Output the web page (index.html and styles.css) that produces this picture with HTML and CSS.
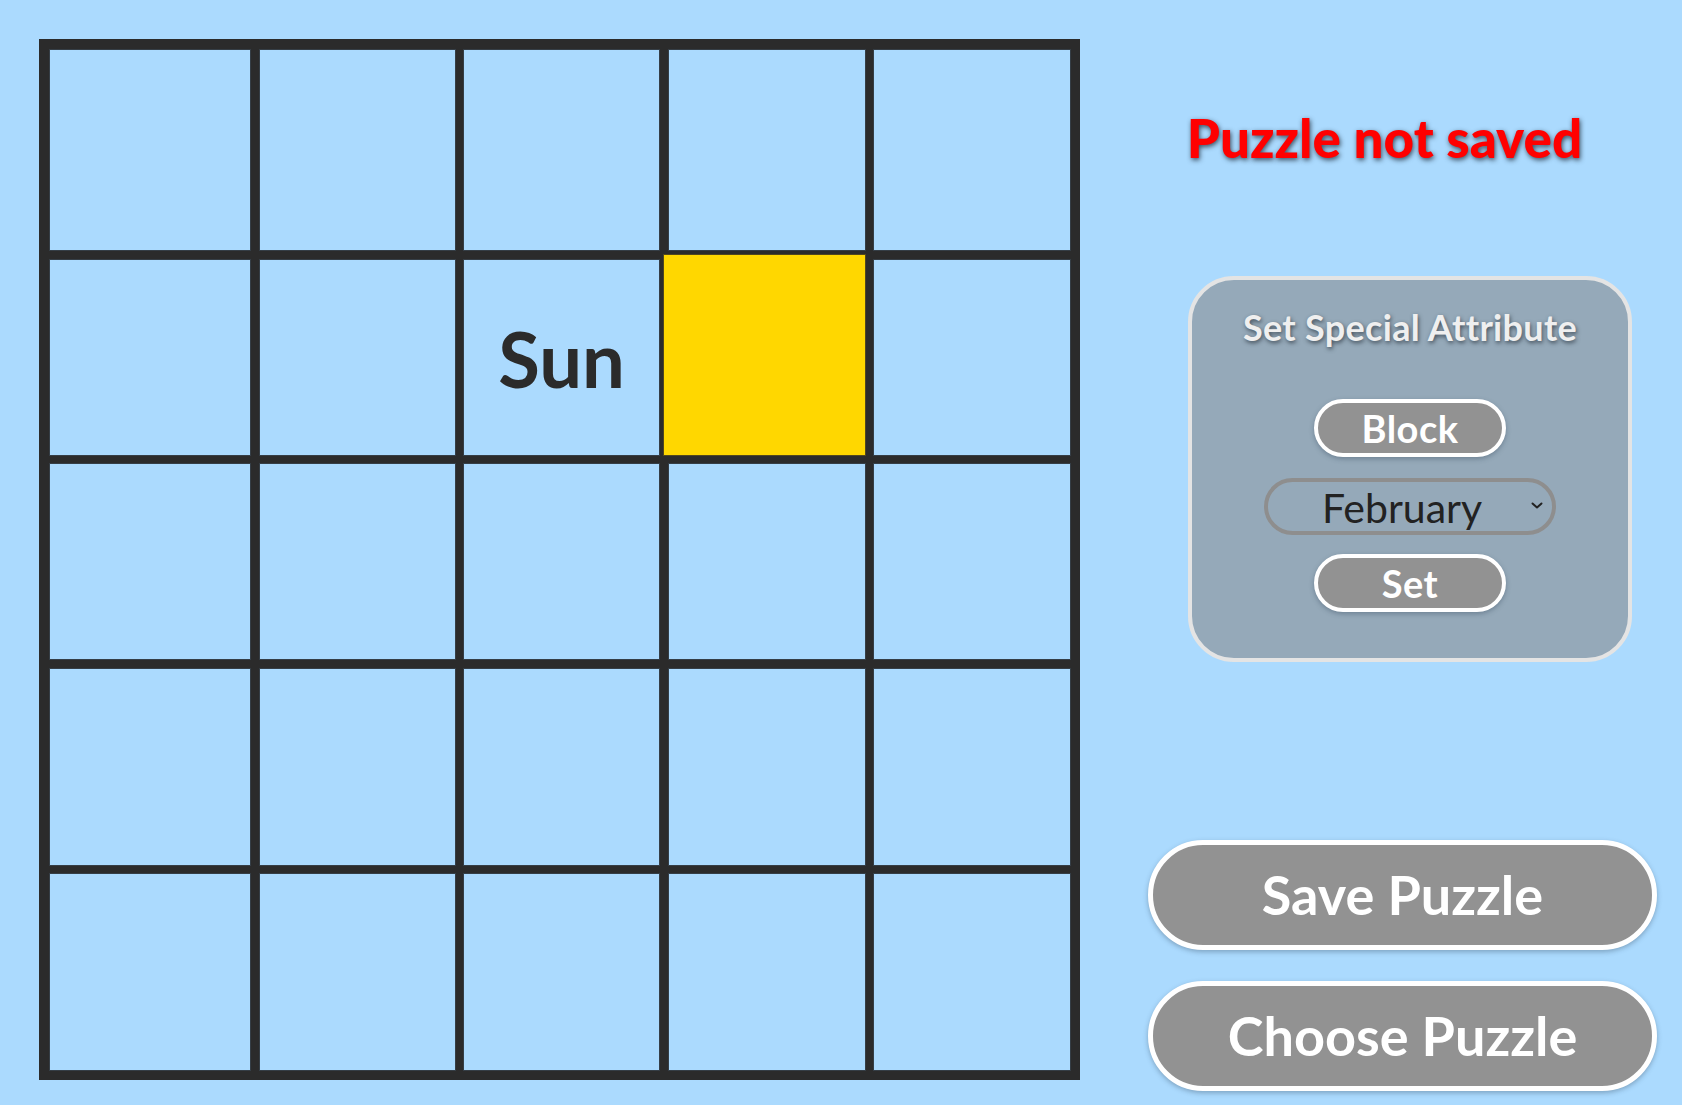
FILE: index.html
```html
<!DOCTYPE html>
<html>
<head>
<meta charset="utf-8">
<link rel="stylesheet" href="styles.css">
</head>
<body>
<div class="page">
  <div class="board">
    <div class="cell"></div><div class="cell"></div><div class="cell"></div><div class="cell"></div><div class="cell"></div>
    <div class="cell"></div><div class="cell"></div><div class="cell word">Sun</div><div class="cell sel"></div><div class="cell"></div>
    <div class="cell"></div><div class="cell"></div><div class="cell"></div><div class="cell"></div><div class="cell"></div>
    <div class="cell"></div><div class="cell"></div><div class="cell"></div><div class="cell"></div><div class="cell"></div>
    <div class="cell"></div><div class="cell"></div><div class="cell"></div><div class="cell"></div><div class="cell"></div>
  </div>
  <div class="side">
    <div class="status">Puzzle not saved</div>
    <div class="panel">
      <div class="panel-title">Set Special Attribute</div>
      <button class="pill small">Block</button>
      <div class="select">
        <span class="select-text">February</span>
        <svg class="chev" width="14" height="9" viewBox="0 0 14 9"><path d="M2.5 2.5 L7 6.5 L11.5 2.5" fill="none" stroke="#222" stroke-width="2" stroke-linecap="round" stroke-linejoin="round"/></svg>
      </div>
      <button class="pill small">Set</button>
    </div>
    <button class="pill big save">Save Puzzle</button>
    <button class="pill big choose">Choose Puzzle</button>
  </div>
</div>
</body>
</html>
```
FILE: styles.css
```css
html, body {
  margin: 0;
  padding: 0;
  background: #abdafe;
  font-family: "Lato", "Noto Sans", sans-serif;
}
.page {
  display: flex;
  align-items: flex-start;
  width: 1682px;
  height: 1105px;
  overflow: hidden;
}
.board {
  margin: 39px 0 0 39px;
  display: grid;
  grid-template-columns: 200px 195px 195px 196px 196px;
  grid-template-rows: 200px 195px 195px 196px 196px;
  gap: 9.5px;
  padding: 11px 10px 10px 11px;
  background: #2b2b2b;
}
.cell {
  background: #abdafe;
  box-shadow: 0 0 0 1px rgba(60,75,88,0.6);
}
.cell.sel {
  background: #ffd700;
  margin: -5px 0 0 -5px;
  box-shadow: 0 0 0 1px rgba(120,100,20,0.5);
}
.word {
  display: flex;
  align-items: center;
  justify-content: center;
  font-size: 76px;
  font-weight: 700;
  color: #2b2b2b;
  padding-top: 2px;
}
.side {
  display: flex;
  flex-direction: column;
  align-items: flex-start;
  padding-left: 68px;
  width: 509px;
}
.status {
  width: 473px;
  margin-top: 107px;
  text-align: center;
  font-size: 53px;
  line-height: 62px;
  font-weight: 900;
  color: #ff0000;
  text-shadow: 1px 2px 5px rgba(20,30,40,0.75);
}
.panel {
  box-sizing: border-box;
  margin-top: 107px;
  margin-left: 40px;
  width: 444px;
  height: 386px;
  border: 4px solid #e4e4e4;
  border-radius: 46px;
  background: #95a9b9;
  display: flex;
  flex-direction: column;
  align-items: center;
  padding-top: 26px;
}
.panel-title {
  font-size: 36px;
  line-height: 42px;
  font-weight: 700;
  color: #efefef;
  letter-spacing: 0.3px;
  text-shadow: 1px 2px 4px rgba(30,40,50,0.7);
  margin-bottom: 51px;
}
.pill {
  box-sizing: border-box;
  font-family: "Lato", "Noto Sans", sans-serif;
  font-weight: 700;
  color: #ffffff;
  background: #929292;
  border-style: solid;
  border-color: #ffffff;
  border-radius: 999px;
  padding: 0;
  box-shadow: 0 2px 5px rgba(40,60,80,0.35);
}
.pill.small {
  width: 192px;
  height: 58px;
  border-width: 4px;
  font-size: 38px;
  line-height: 48px;
  letter-spacing: 0.5px;
}
.select {
  box-sizing: border-box;
  position: relative;
  margin: 21px 0 19px;
  width: 292px;
  height: 57px;
  border: 4px solid #8e8e8e;
  border-radius: 999px;
  display: flex;
  align-items: center;
  justify-content: center;
}
.select-text {
  font-size: 41px;
  color: #222222;
  margin-right: 16px;
  margin-top: 2px;
}
.chev {
  position: absolute;
  right: 8px;
  top: 19px;
}
.pill.big {
  width: 509px;
  height: 110px;
  border-width: 5px;
  font-size: 54px;
  line-height: 98px;
}
.save {
  margin-top: 178px;
}
.choose {
  margin-top: 31px;
  font-size: 53px;
}
```
